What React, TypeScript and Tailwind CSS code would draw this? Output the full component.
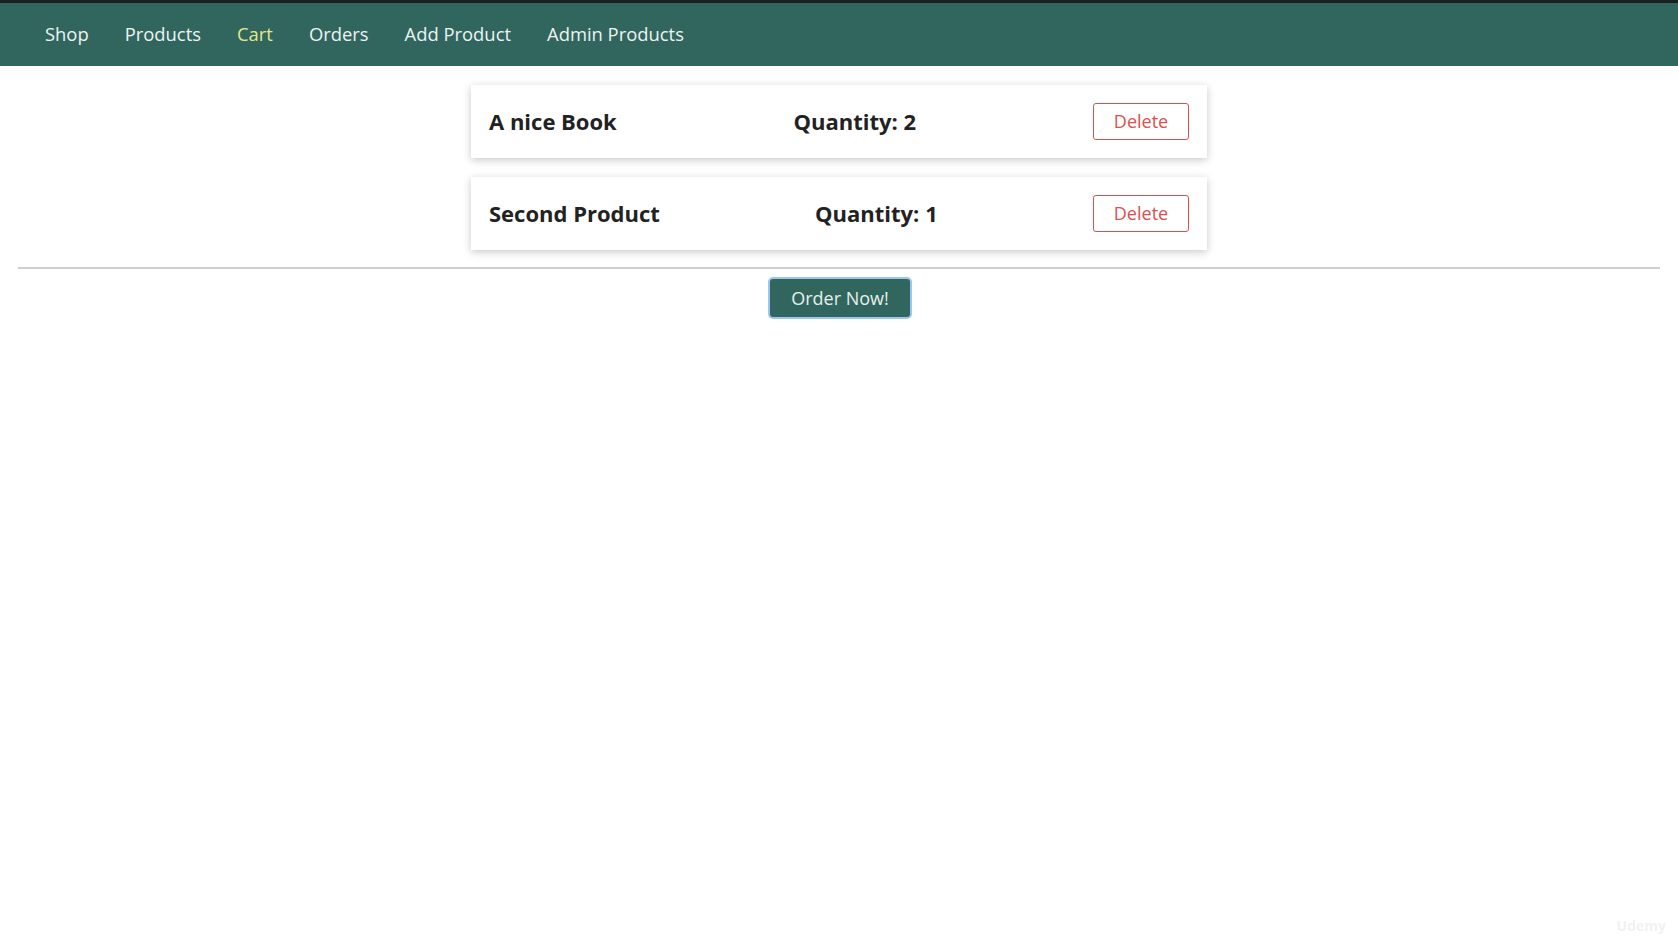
import React from "react";

const items = [
  { title: "A nice Book", qty: 2 },
  { title: "Second Product", qty: 1 },
];

export default function App() {
  return (
    <div
      className="min-h-[946px] w-full bg-white text-[18px] text-[#222]"
      style={{ fontFamily: '"Open Sans", "Noto Sans", sans-serif' }}
    >
      <div className="h-[3px] bg-[#1c1f1f]" />
      <header className="flex h-[63px] items-center bg-[#30665e] px-[45px] pb-[2px]">
        <nav className="flex items-center gap-[36px] text-[18.4px] text-[#eef3f1]">
          <span>Shop</span>
          <span>Products</span>
          <span className="text-[#e4e88a]">Cart</span>
          <span>Orders</span>
          <span>Add Product</span>
          <span>Admin Products</span>
        </nav>
      </header>
      <main className="px-[18px] pt-[19px]">
        <ul className="mx-auto flex w-[736px] flex-col gap-[19px]">
          {items.map((it) => (
            <li
              key={it.title}
              className="flex h-[73px] items-center justify-between bg-white px-[18px] shadow-[0_2px_8px_rgba(0,0,0,0.22)]"
            >
              <span className="text-[22px] font-bold">{it.title}</span>
              <span className="text-[22px] font-bold">Quantity: {it.qty}</span>
              <button className="h-[37px] w-[96px] rounded-[3px] border border-[#d9504f] bg-white text-[18px] text-[#d9504f]">
                Delete
              </button>
            </li>
          ))}
        </ul>
        <hr className="mt-[17px] border-t-2 border-[#cfcfcf]" />
        <div className="mt-[10px] flex justify-center">
          <button className="ml-[2px] h-[38px] w-[140px] rounded-[3px] bg-[#30665e] text-[18px] text-[#e8efed] shadow-[0_0_0_2px_#9cc6f0]">
            Order Now!
          </button>
        </div>
      </main>
      <div className="fixed bottom-[10px] right-[12px] text-[14px] font-bold text-[#f1f1f1]">
        Udemy
      </div>
    </div>
  );
}
